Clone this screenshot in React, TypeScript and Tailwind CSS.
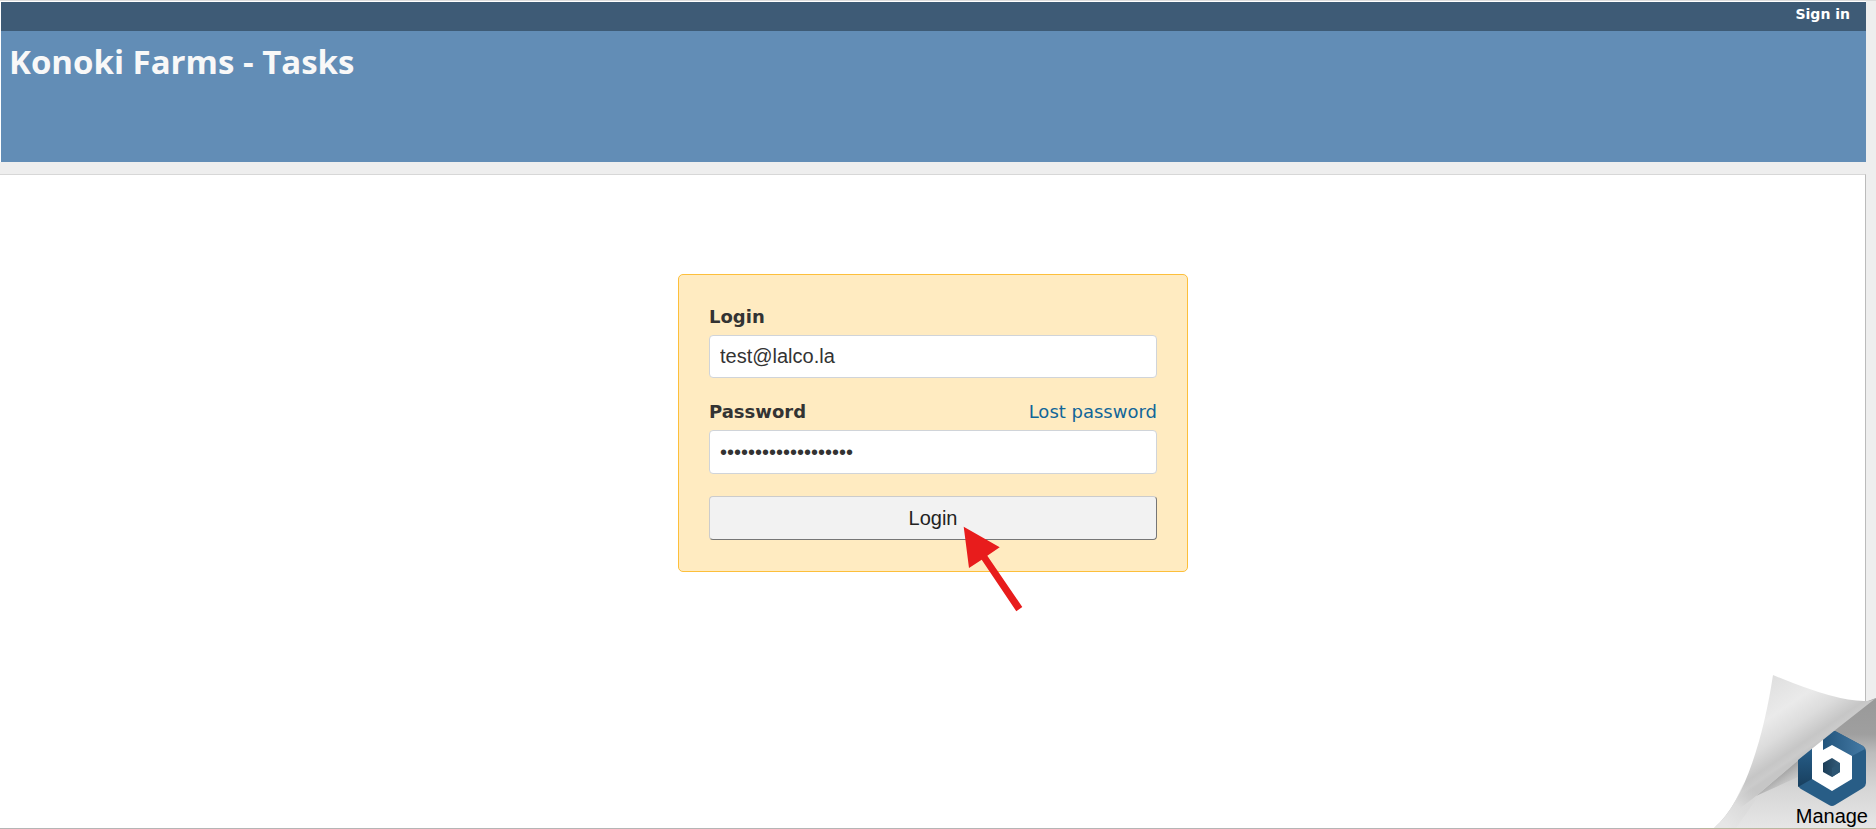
import React from "react";

const verdana = "font-['Verdana','DejaVu_Sans',sans-serif]";
const arial = "font-['Arial','Liberation_Sans',sans-serif]";

function PageCurl() {
  return (
    <a
      href="#manage"
      className={`absolute right-0 bottom-0 flex h-[169px] w-[176px] items-end justify-end pr-2 text-xl leading-[26px] text-black ${arial}`}
    >
      <svg
        viewBox="0 0 176 169"
        className="absolute inset-0 h-full w-full"
        aria-hidden="true"
      >
        <defs>
          <linearGradient id="under" gradientUnits="userSpaceOnUse" x1="0" y1="38" x2="0" y2="168">
            <stop offset="0" stopColor="#999999" />
            <stop offset="0.28" stopColor="#9f9f9f" />
            <stop offset="0.42" stopColor="#bcbcbc" />
            <stop offset="0.7" stopColor="#d6d6d6" />
            <stop offset="1" stopColor="#e6e6e6" />
          </linearGradient>
          <linearGradient id="shade" gradientUnits="userSpaceOnUse" x1="93" y1="104" x2="104" y2="118">
            <stop offset="0" stopColor="#8a8a8a" stopOpacity="0.6" />
            <stop offset="1" stopColor="#b0b0b0" stopOpacity="0" />
          </linearGradient>
          <linearGradient id="fold" gradientUnits="userSpaceOnUse" x1="62" y1="24" x2="108" y2="91">
            <stop offset="0" stopColor="#dfdfdf" />
            <stop offset="0.4" stopColor="#eaeaea" />
            <stop offset="0.65" stopColor="#dcdcdc" />
            <stop offset="0.88" stopColor="#c6c6c6" />
            <stop offset="0.96" stopColor="#cbcbcb" />
            <stop offset="1" stopColor="#c6c6c6" />
          </linearGradient>
          <linearGradient id="blend" gradientUnits="userSpaceOnUse" x1="52" y1="128" x2="22" y2="162">
            <stop offset="0" stopColor="#d2d2d2" stopOpacity="0" />
            <stop offset="0.5" stopColor="#dcdcdc" />
            <stop offset="1" stopColor="#e6e6e6" />
          </linearGradient>
          <linearGradient id="hexTop" gradientUnits="userSpaceOnUse" x1="124" y1="0" x2="165" y2="0">
            <stop offset="0" stopColor="#23557d" />
            <stop offset="1" stopColor="#447aa5" />
          </linearGradient>
          <linearGradient id="hexLeft" x1="0" y1="0" x2="0" y2="1">
            <stop offset="0" stopColor="#28608c" />
            <stop offset="1" stopColor="#183f5e" />
          </linearGradient>
          <linearGradient id="core" x1="0" y1="0" x2="1" y2="0">
            <stop offset="0" stopColor="#1b3d57" />
            <stop offset="1" stopColor="#355d7a" />
          </linearGradient>
        </defs>
        <path d="M176 38 L168 41 L128 70 L90 102 L54 132 Q38 148 14 168 H176 Z" fill="url(#under)" />
        <path d="M131 73 L56 136 L136 100 Z" fill="url(#shade)" />
        <path
          d="M98 96 L131 72 Q134 70 137 72 L163 86 Q166 88 166 92 V123 Q166 126 163 128 L135 145 Q132 147 129 145 L101 129 Q98 127 98 123 Z"
          fill="#285d86"
        />
        <path d="M122 78 L131 72 Q134 70 137 72 L163 86 L165 89 L152 96 L132 85 L122 90 Z" fill="url(#hexTop)" />
        <path d="M98 96 L112 86 V119 L98 127 Z" fill="url(#hexLeft)" />
        <path
          d="M112 84 L123 76 V90 L132 85 L152 96 V119 L132 131 L112 119 Z"
          fill="#ffffff"
        />
        <path d="M132 98 L140 103 V112 L132 117 L123 112 V103 Z" fill="url(#core)" />
        <path d="M132 108 L140 103 V112 L132 117 Z" fill="#2d5673" />
        <path
          d="M73 15 Q137 42 166 41 Q172 41 176 38 L134 71 L98 100 L56 136 Q38 150 14 168 C45 142 64 75 73 15 Z"
          fill="url(#fold)"
        />
        <path d="M46 116 C38 138 29 155 14 168 H36 L62 131 Z" fill="url(#blend)" />
        <path d="M0 168 H176 V169 H0 Z" fill="#b7b7a0" />
      </svg>
      <span className="relative">Manage</span>
    </a>
  );
}

function Arrow() {
  return (
    <svg
      viewBox="0 0 60 86"
      className="pointer-events-none absolute top-[251px] left-[284px] h-[86px] w-[60px]"
      aria-hidden="true"
    >
      <path
        d="M0.7 0.7 L36.7 21.3 L24.3 29.7 L59.3 81 L53.3 85.3 L18.7 33.7 L6 42 Z"
        fill="#e81c1c"
      />
    </svg>
  );
}

const field =
  "w-full rounded-[4px] border border-[#d0d4d9] bg-white px-2.5 text-xl text-[#333] outline-none";

export default function App() {
  return (
    <div
      className={`relative flex min-h-screen flex-col border-t border-[#dcdcdc] bg-[#eee] pr-2.5 text-[#333] ${verdana}`}
    >
      <header className="border-t border-l border-white">
        <nav className="flex h-[29px] justify-end bg-[#3e5b76] pr-4 text-sm leading-6 font-bold text-white">
          <a href="#signin">Sign in</a>
        </nav>
        <div className="h-[131px] bg-[#628db6] px-2 pt-2">
          <h1 className="font-['Trebuchet_MS','Open_Sans',sans-serif] text-[33px] leading-[46px] font-bold text-[#f8f8f8]">
            Konoki Farms - Tasks
          </h1>
        </div>
      </header>

      <main className="mt-3 flex grow flex-col items-center border-t border-r border-b border-t-[#d7d7d7] border-r-[#bbb] border-b-[#b5b5b5] bg-white pt-[99px] pl-px">
        <form
          onSubmit={(e) => e.preventDefault()}
          className="relative w-[510px] rounded-[5px] border border-[#fdbf3b] bg-[#ffebc1] px-[30px] pt-[30px] pb-[31px] text-lg leading-6"
        >
          <div className="mb-[22px] flex flex-col gap-1.5">
            <label htmlFor="username" className="font-bold">
              Login
            </label>
            <input
              id="username"
              type="text"
              defaultValue="test@lalco.la"
              className={`h-[43px] ${field} ${arial}`}
            />
          </div>
          <div className="mb-[22px] flex flex-col gap-1.5">
            <div className="flex justify-between">
              <label htmlFor="password" className="font-bold">
                Password
              </label>
              <a href="#lost" className="text-[#169]">
                Lost password
              </a>
            </div>
            <input
              id="password"
              type="password"
              defaultValue="aaaaaaaaaaaaaaaaaaa"
              className={`h-11 ${field} ${arial}`}
            />
          </div>
          <button
            type="submit"
            className={`block h-11 w-full rounded-[4px] border border-t-[#ccc] border-r-[#767676] border-b-[#767676] border-l-[#ccc] bg-[#f2f2f2] text-xl text-[#222] ${arial}`}
          >
            Login
          </button>
          <Arrow />
        </form>
      </main>
      <PageCurl />
    </div>
  );
}
